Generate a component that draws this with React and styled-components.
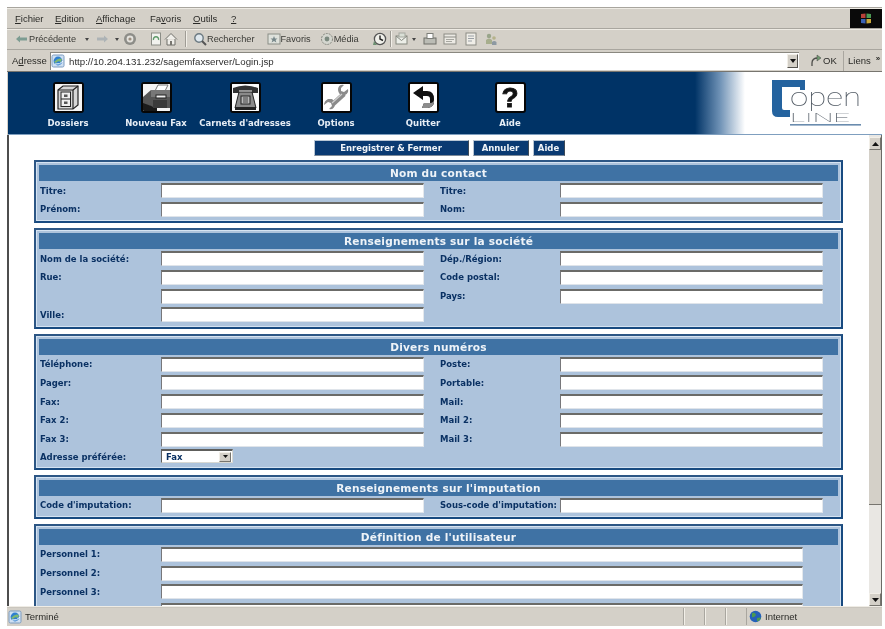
import React from "react";
import styled, { createGlobalStyle } from "styled-components";

const Global = createGlobalStyle`
  html, body { margin: 0; padding: 0; background: #fff; overflow: hidden; }
  * { box-sizing: border-box; }
`;

const Page = styled.div`
  width: 885px; height: 629px; padding: 7px 3px 3px 7px; background: #fff; overflow: hidden;
`;
const Win = styled.div`
  width: 875px; height: 619px; display: flex; flex-direction: column; background: #d4d0c8;
  border-top: 1px solid #a8a59e; filter: blur(0.4px);
  font-family: "Liberation Sans", Arial, sans-serif; font-size: 9.5px; color: #2a2a27;
`;
const MenuBar = styled.div`
  height: 21px; flex: none; display: flex; align-items: center; justify-content: space-between;
  border-bottom: 1px solid #a9a69f; box-shadow: inset 0 1px 0 #eeebe4;
`;
const MenuList = styled.div` display: flex; align-items: center; padding-left: 8px; `;
const MenuItem = styled.span` width: ${p => p.$w}px; white-space: nowrap; `;
const Flag = styled.div`
  width: 32px; height: 19px; background: #0a0a0a; display: flex; align-items: center; justify-content: center;
`;
const Toolbar = styled.div`
  height: 21px; flex: none; display: flex; align-items: center; padding-left: 8px; font-size: 9.2px;
  border-bottom: 1px solid #a9a69f; box-shadow: inset 0 1px 0 #eeebe4;
`;
const Tool = styled.span`
  display: inline-flex; align-items: center; margin-left: ${p => p.$ml || 0}px; white-space: nowrap; color: #3a3a36;
`;
const Caret = styled.span`
  display: inline-block; width: 0; height: 0; margin-left: ${p => p.$ml || 0}px;
  border-left: 2.5px solid transparent; border-right: 2.5px solid transparent; border-top: 3px solid #444;
`;
const ToolSep = styled.span`
  width: 2px; height: 16px; margin-left: ${p => p.$ml || 0}px;
  border-left: 1px solid #9f9c95; border-right: 1px solid #f2efe8;
`;
const AddressBar = styled.div`
  height: 22px; flex: none; display: flex; align-items: center; border-bottom: 1px solid #77756f;
`;
const AddressLabel = styled.span` width: 43px; flex: none; padding-left: 5px; `;
const AddressField = styled.div`
  width: 749px; flex: none; height: 18px; background: #fff; display: flex; align-items: center; gap: 4px; padding-right: 1px;
  border-top: 1px solid #8a8880; border-left: 1px solid #8a8880; color: #2f2f2f;
`;
const Url = styled.span` flex: 1; font-size: 9.7px; `;
const DropBtn = styled.span`
  width: 11px; height: 14px; background: #d4d0c8; display: flex; align-items: center; justify-content: center;
  border: 1px solid; border-color: #f2efe8 #55534f #55534f #f2efe8;
`;
const GoBtn = styled.span` display: inline-flex; flex: none; align-items: center; margin-left: 10px; gap: 0; width: 35px; height: 20px; border-right: 1px solid #a9a69f; `;
const Links = styled.span` margin-left: 4px; `;
const Chevron = styled.span` margin-left: 5px; font-size: 8px; font-weight: bold; position: relative; top: -2px; `;

const Banner = styled.div`
  height: 63px; flex: none; display: flex; align-items: stretch; justify-content: space-between;
  margin-left: 1px; padding-left: 16px;
  background: linear-gradient(90deg, #003366 0, #003366 687px, #6f92b6 712px, #fff 737px);
  border-bottom: 1px solid #7f9fbf;
`;
const Nav = styled.div` display: flex; `;
const NavItem = styled.div`
  width: ${p => p.$w}px; display: flex; flex-direction: column; align-items: center; padding-top: 10px; gap: 5px;
  font-family: "DejaVu Sans", sans-serif; font-size: 8.5px; font-weight: bold; color: #e6eef6; white-space: nowrap;
`;
const NavIcon = styled.div`
  width: 31px; height: 31px; background: #fff; border: 2px solid #060606; border-radius: 3px; overflow: hidden;
  display: flex; align-items: center; justify-content: center;
`;
const LogoSvg = styled.svg`
  flex: none; margin-top: 6px; display: block;
`;
const LogoWord = styled.text`
  font-family: Roboto, "Liberation Sans", sans-serif; font-weight: 100; fill: #4f5862;
`;

const Body = styled.div`
  flex: 1; min-height: 0; display: flex; border-left: 2px solid #4d4d4d; overflow: hidden;
`;
const Content = styled.div`
  width: 860px; background: #fff; overflow: hidden; padding-top: 5px;
`;
const ButtonRow = styled.div`
  display: flex; justify-content: center; gap: 4px; margin-bottom: 4px;
`;
const ActionButton = styled.div`
  width: ${p => p.$w}px; height: 16px; background: #0a3a72; color: #f0f4f8;
  display: flex; align-items: center; justify-content: center;
  border: 1px solid; border-color: #b9c6d4 #3d4a58 #7e8a98 #b9c6d4;
  font-family: "DejaVu Sans", sans-serif; font-size: 8.5px; font-weight: bold;
`;
const Section = styled.section`
  width: 809px; margin: 0 0 5px 25px; padding: 3px 3px 4.25px;
  background: #adc3dc; border: 2px solid #1f4b7c; border-color: #2c5685 #184a80 #184a80 #2c5685;
  box-shadow: inset 0 0 0 1px #d5e3f2;
`;
const SectionTitle = styled.h2`
  margin: 0 0 2px; height: 16px; background: #3f72a4; color: #eef3f8; text-align: center;
  font-family: "DejaVu Sans", sans-serif; font-size: 10.6px; font-weight: bold; line-height: 16px; letter-spacing: 0.2px;
`;
const Grid = styled.div`
  display: grid; grid-template-columns: 121px 263px 16px 120px 263px; grid-auto-rows: 15px;
  grid-template-rows: ${p => p.$rows || "none"}; row-gap: 3.75px; padding-left: 1px;
`;
const WideGrid = styled.div`
  display: grid; grid-template-columns: 121px 642px; grid-auto-rows: 15px; row-gap: 3.75px; padding-left: 1px;
`;
const Label = styled.label`
  align-self: center; font-family: "DejaVu Sans", sans-serif; font-size: 8.5px; font-weight: bold; color: #0a3163; white-space: nowrap;
  grid-column: ${p => p.$col || "auto"};
`;
const Field = styled.div`
  height: 15px; background: #fff; border: 1px solid; border-color: #6b6b68 #e4e8ec #dfe4ea #77777a; border-top-width: 2px;
  grid-column: ${p => p.$col || "auto"};
`;
const BlankRowField = styled(Field)` grid-column: 2; `;
const SelectBox = styled.div`
  width: 72px; height: 14px; margin-top: -1px; background: #fff; display: flex; align-items: center; justify-content: space-between; padding: 0 1px 0 4px;
  border: 1px solid; border-color: #5e5e5c #d8d8d2 #d8d8d2 #5e5e5c; border-top-width: 2px;
  font-family: "DejaVu Sans", sans-serif; font-size: 8.5px; font-weight: bold; color: #0a3163;
`;
const SelectBtn = styled.span`
  width: 12px; height: 10px; background: #d4d0c8; display: flex; align-items: center; justify-content: center;
  border: 1px solid; border-color: #f2efe8 #77756f #77756f #f2efe8;
`;
const Scrollbar = styled.div`
  width: 13px; flex: none; display: flex; flex-direction: column; background: #e9e7e3; border-right: 1px solid #6b6a66; padding-top: 2px;
`;
const ScrollBtn = styled.div`
  height: 13px; flex: none; background: #d4d0c8; display: flex; align-items: center; justify-content: center;
  border: 1px solid; border-color: #f2efe8 #77756f #77756f #f2efe8;
`;
const Thumb = styled.div`
  height: 355px; flex: none; background: #d4d0c8; border-bottom: 1px solid #77756f;
`;
const Track = styled.div` flex: 1; `;
const StatusBar = styled.div`
  height: 20px; flex: none; display: flex; align-items: center; border-top: 1px solid #efece5;
  box-shadow: inset 0 1px 0 #cac6be; padding-left: 1px;
`;
const StatusMain = styled.div` width: 675px; display: flex; align-items: center; gap: 3px; `;
const StatusCell = styled.div` width: 21px; height: 17px; border-left: 1px solid #a9a69f; box-shadow: inset 1px 0 0 #f2efe8; `;
const StatusZone = styled.div`
  display: flex; align-items: center; gap: 3px; padding-left: 2px; height: 17px; border-left: 1px solid #a9a69f;
`;

const Arrow = ({ up, w = 7, h = 4 }) => (
  <svg width={w} height={h} viewBox="0 0 7 5" preserveAspectRatio="none"><path d={up ? "M3.5 0 L7 5 H0 Z" : "M0 0 H7 L3.5 5 Z"} fill="#111" /></svg>
);
const IEIcon = ({ s = 13 }) => (
  <svg width={s} height={s} viewBox="0 0 14 14">
    <rect x="1" y="1" width="12" height="12" rx="1.5" fill="#cfe0f2" stroke="#7d9cc0" />
    <circle cx="7" cy="7" r="4.4" fill="#2f7fd0" />
    <path d="M3 8 Q7 3 11 5 L10 8 Q7 6 5 9 Z" fill="#7fb872" />
    <path d="M4 10 Q9 11 12 7" stroke="#fff" fill="none" />
  </svg>
);

const T = ({ children, w = 14 }) => <svg width={w} height="14" viewBox={`0 0 ${w} 14`}>{children}</svg>;
const Icons = {
  back: <T><path d="M1 7 L5 3.5 V5.5 H12 V8.5 H5 V10.5 Z" fill="#7d9c92" /></T>,
  fwd: <T><path d="M13 7 L9 3.5 V5.5 H2 V8.5 H9 V10.5 Z" fill="#adb3b6" /></T>,
  stop: <T><circle cx="7" cy="7" r="6" fill="#8d8d88" /><circle cx="7" cy="7" r="3.4" fill="#e4e2dd" /><circle cx="7" cy="7" r="1.6" fill="#9c8f80" /></T>,
  refresh: <T><rect x="2.5" y="1" width="9" height="12" fill="#f2f2ee" stroke="#8b8d86" /><path d="M4.5 8 A2.6 2.6 0 1 1 9.5 8" stroke="#5f9a6a" strokeWidth="1.4" fill="none" /></T>,
  home: <T><path d="M1 7.5 L7 1.5 L13 7.5 M3 7 V13 H11 V7" fill="#efeee9" stroke="#6e6e69" /><rect x="6" y="9" width="2" height="4" fill="#77756f" /></T>,
  search: <T><circle cx="6" cy="6" r="4.2" fill="#dfe8ee" stroke="#6c7a82" strokeWidth="1.4" /><path d="M9 9 L13 13" stroke="#555" strokeWidth="2" /></T>,
  fav: <T><rect x="1" y="2" width="12" height="10" fill="#dfe2dc" stroke="#8a8d86" /><path d="M7 4 L8 6.5 H10.5 L8.6 8 L9.4 10.4 L7 9 L4.6 10.4 L5.4 8 L3.5 6.5 H6 Z" fill="#77878a" /></T>,
  media: <T><circle cx="7" cy="7" r="5.5" fill="#d4d6cf" stroke="#85877f" strokeDasharray="2 1" /><circle cx="7" cy="7" r="2.4" fill="#7c8a80" /></T>,
  hist: <T w={16}><circle cx="8" cy="7" r="5.6" fill="#f0f0ea" stroke="#555" strokeWidth="1.3" /><path d="M8 3.5 V7 L11 8.5" stroke="#222" fill="none" strokeWidth="1.4" /><path d="M2 9 L5 13 L1 13 Z" fill="#6b8f70" /></T>,
  mail: <T w={16}><rect x="1" y="4" width="11" height="8" fill="#eceee8" stroke="#85887f" /><path d="M1 4 L6.5 8.5 L12 4" fill="none" stroke="#85887f" /><rect x="4" y="1" width="6" height="4" fill="#d9dfd6" stroke="#a5a89f" /></T>,
  print: <T><rect x="1" y="6" width="12" height="6" fill="#bbbcb5" stroke="#6e6f69" /><rect x="4" y="1.5" width="6" height="5" fill="#fff" stroke="#7b7c76" /></T>,
  edit: <T><rect x="1" y="2" width="12" height="10" fill="#eceae4" stroke="#8b8b84" /><path d="M1 5 H13" stroke="#8b8b84" /><path d="M3 7.5 H11 M3 9.5 H9" stroke="#a7a7a0" /></T>,
  discuss: <T><rect x="2" y="1" width="10" height="12" fill="#f0eee8" stroke="#8b8b84" /><path d="M4 4 H10 M4 6.5 H10 M4 9 H8" stroke="#9aa0a6" /></T>,
  msg: <T><circle cx="5" cy="4" r="2.2" fill="#99a58a" /><path d="M2 12 V8 Q5 5 8 8 V12 Z" fill="#a7ae8d" /><circle cx="10" cy="6" r="1.8" fill="#b5b28a" /><path d="M8 13 V10 Q10 8 12.5 10 V13 Z" fill="#8d99a2" /></T>,
  go: <T><path d="M3 12 V9 Q3 4 9 4" stroke="#4d4d4a" strokeWidth="1.3" fill="none" /><path d="M8 1 L12 4 L8 7 Z" fill="#6f9a70" stroke="#444" strokeWidth=".5" /></T>,
};

const B = ({ children }) => <svg width="27" height="27" viewBox="0 0 27 27">{children}</svg>;
const NavIcons = {
  folder: <B>
    <rect x="0" y="0" width="27" height="27" fill="#f4f4f4" />
    <path d="M3 6 L8 2 H23 V21 L18 25 H3 Z" fill="#d6d6d6" stroke="#222" strokeWidth="1.2" />
    <path d="M3 6 H18 V25" fill="none" stroke="#222" strokeWidth="1.2" />
    <path d="M18 6 L23 2" stroke="#222" strokeWidth="1.2" />
    <rect x="6" y="8" width="9.5" height="14.5" fill="#efefef" stroke="#222" />
    <path d="M6 15 H15.5" stroke="#222" strokeWidth="1.2" />
    <rect x="9" y="10.5" width="3.5" height="2.5" fill="#555" /><rect x="9" y="17.5" width="3.5" height="2.5" fill="#555" />
  </B>,
  fax: <B>
    <rect width="27" height="27" fill="#f4f4f4" />
    <path d="M11 9 L15 1 H25 L21 9 Z" fill="#fff" stroke="#777" />
    <path d="M0 13 L8 6 H27 V24 H14 L0 20 Z" fill="#555" />
    <path d="M8 6 H27 V13 H8 Z" fill="#777" />
    <rect x="13" y="11" width="10" height="3" fill="#eee" stroke="#222" />
    <path d="M0 19 L14 24 V27 H0 Z" fill="#1a1a1a" />
    <path d="M10 16 H24 V24 H10 Z" fill="#3a3a3a" />
  </B>,
  phone: <B>
    <rect width="27" height="27" fill="#fbfbfb" />
    <path d="M1 4 Q13 -1 26 4 V9 H20 V6.5 H7 V9 H1 Z" fill="#333" />
    <path d="M7 8 H20 L24 24 H3 Z" fill="#8a8a8a" stroke="#222" />
    <rect x="9" y="12" width="9" height="8" fill="#b8b8b8" stroke="#222" />
    <path d="M11 14 H16 M11 16 H16 M11 18 H16" stroke="#444" />
    <rect x="3" y="23" width="21" height="3" fill="#222" />
  </B>,
  wrench: <B>
    <rect width="27" height="27" fill="#fff" />
    <path d="M21 10 L10 20" stroke="#8b8b8b" strokeWidth="5" />
    <path d="M25 5 L21 8 L18 7 L18 4 L21 1 Q16 0 15 5 Q15 9 18 11 L22 11 Q26 9 25 5 Z" fill="#8b8b8b" />
    <path d="M1 21 L5 18 L8 19 L9 22 L6 25 Q11 26 12 21 Q12 17 9 15 L5 15 Q1 17 1 21 Z" fill="#8b8b8b" />
    <path d="M9 19 L19 10" stroke="#d0d0d0" strokeWidth="1.2" />
  </B>,
  quit: <B>
    <rect width="27" height="27" fill="#fff" />
    <path d="M13 2 L3 9 L13 16 V12 H17 Q20 12 20 15 V19 H14 L12 24 H18 Q25 23 24 15 Q24 7 17 7 H13 Z" fill="#111" />
    <path d="M14 19 H20 Q24 19 24 15 Q25 23 18 24 H12 Z" fill="#8d8d8d" />
  </B>,
};

const Help = styled.span`
  font-family: "Liberation Sans", sans-serif; font-size: 28px; font-weight: 900; color: #111; line-height: 1; -webkit-text-stroke: 0.8px #111;
`;

const navItems = [
  ["Dossiers", 88, NavIcons.folder],
  ["Nouveau Fax", 88, NavIcons.fax],
  ["Carnets d'adresses", 90, NavIcons.phone],
  ["Options", 92, NavIcons.wrench],
  ["Quitter", 82, NavIcons.quit],
  ["Aide", 92, <Help>?</Help>],
];

const Row2 = ({ a, b }) => (
  <>
    {a ? <Label $col="1">{a.l}</Label> : null}
    {a ? <Field $col="2" /> : null}
    {b ? <Label $col="4">{b.l}</Label> : null}
    {b ? <Field $col="5" /> : null}
  </>
);

const FormSection = ({ title, rows, extra, gridRows }) => (
  <Section>
    <SectionTitle>{title}</SectionTitle>
    <Grid $rows={gridRows}>
      {rows.map(([a, b], i) => (
        <Row2 key={i} a={a && { l: a }} b={b && { l: b }} />
      ))}
      {extra}
    </Grid>
  </Section>
);

export default function App() {
  return (
    <>
      <Global />
      <Page>
        <Win>
          <MenuBar>
            <MenuList>
              <MenuItem $w={40}><u>F</u>ichier</MenuItem>
              <MenuItem $w={41}><u>E</u>dition</MenuItem>
              <MenuItem $w={54}><u>A</u>ffichage</MenuItem>
              <MenuItem $w={43}>Fa<u>v</u>oris</MenuItem>
              <MenuItem $w={38}><u>O</u>utils</MenuItem>
              <MenuItem $w={10}><u>?</u></MenuItem>
            </MenuList>
            <Flag>
              <svg width="12" height="11" viewBox="0 0 12 11">
                <path d="M1 1 L5.5 .5 V5 H1 Z" fill="#b8413a" /><path d="M6.5 .5 L11 1 V5 H6.5 Z" fill="#4c9a55" />
                <path d="M1 6 H5.5 V10.5 L1 10 Z" fill="#3a62b5" /><path d="M6.5 6 H11 V10 L6.5 10.5 Z" fill="#c9a83a" />
              </svg>
            </Flag>
          </MenuBar>
          <Toolbar>
            <Tool>{Icons.back}Précédente</Tool>
            <Caret $ml={9} />
            <Tool $ml={6}>{Icons.fwd}</Tool>
            <Caret $ml={6} />
            <Tool $ml={4}>{Icons.stop}</Tool>
            <Tool $ml={12}>{Icons.refresh}</Tool>
            <Tool $ml={1}>{Icons.home}</Tool>
            <ToolSep $ml={7} />
            <Tool $ml={6}>{Icons.search}Rechercher</Tool>
            <Tool $ml={12}>{Icons.fav}Favoris</Tool>
            <Tool $ml={9}>{Icons.media}Média</Tool>
            <Tool $ml={13}>{Icons.hist}</Tool>
            <ToolSep $ml={2} />
            <Tool $ml={3}>{Icons.mail}</Tool>
            <Caret $ml={1} />
            <Tool $ml={7}>{Icons.print}</Tool>
            <Tool $ml={6}>{Icons.edit}</Tool>
            <Tool $ml={7}>{Icons.discuss}</Tool>
            <Tool $ml={6}>{Icons.msg}</Tool>
          </Toolbar>
          <AddressBar>
            <AddressLabel>A<u>d</u>resse</AddressLabel>
            <AddressField>
              <IEIcon s={14} />
              <Url>http://10.204.131.232/sagemfaxserver/Login.jsp</Url>
              <DropBtn><Arrow w={6} h={4} /></DropBtn>
            </AddressField>
            <GoBtn>{Icons.go}OK</GoBtn>
            <Links>Liens</Links>
            <Chevron>»</Chevron>
          </AddressBar>
          <Banner>
            <Nav>
              {navItems.map(([label, w, icon]) => (
                <NavItem key={label} $w={w}>
                  <NavIcon>{icon}</NavIcon>
                  {label}
                </NavItem>
              ))}
            </Nav>
            <LogoSvg width="112" height="52" viewBox="0 0 112 52">
              <path d="M2 2 H35 V12 H30 V9 H12 V30 Q12 32 14 32 H20 V39 H8 Q2 39 2 33 Z" fill="#24639f" />
              <LogoWord x="20" y="28" fontSize="25" textLength="71" lengthAdjust="spacingAndGlyphs">open</LogoWord>
              <LogoWord x="20" y="44" fontSize="13" textLength="60" lengthAdjust="spacingAndGlyphs">LINE</LogoWord>
              <rect x="20" y="46" width="71" height="1.6" fill="#6a8cae" />
            </LogoSvg>
          </Banner>
          <Body>
            <Content>
              <ButtonRow>
                <ActionButton $w={155}>Enregistrer &amp; Fermer</ActionButton>
                <ActionButton $w={56}>Annuler</ActionButton>
                <ActionButton $w={32}>Aide</ActionButton>
              </ButtonRow>
              <FormSection title="Nom du contact" rows={[["Titre:", "Titre:"], ["Prénom:", "Nom:"]]} />
              <Section>
                <SectionTitle>Renseignements sur la société</SectionTitle>
                <Grid>
                  <Row2 a={{ l: "Nom de la société:" }} b={{ l: "Dép./Région:" }} />
                  <Row2 a={{ l: "Rue:" }} b={{ l: "Code postal:" }} />
                  <BlankRowField />
                  <Row2 b={{ l: "Pays:" }} />
                  <Row2 a={{ l: "Ville:" }} />
                </Grid>
              </Section>
              <FormSection
                title="Divers numéros"
                gridRows="repeat(5, 15px) 13px"
                rows={[["Téléphone:", "Poste:"], ["Pager:", "Portable:"], ["Fax:", "Mail:"], ["Fax 2:", "Mail 2:"], ["Fax 3:", "Mail 3:"]]}
                extra={
                  <>
                    <Label $col="1">Adresse préférée:</Label>
                    <SelectBox>Fax<SelectBtn><Arrow w={5} h={3} /></SelectBtn></SelectBox>
                  </>
                }
              />
              <FormSection title="Renseignements sur l'imputation" rows={[["Code d'imputation:", "Sous-code d'imputation:"]]} />
              <Section>
                <SectionTitle>Définition de l'utilisateur</SectionTitle>
                <WideGrid>
                  {["Personnel 1:", "Personnel 2:", "Personnel 3:"].map(l => (
                    <React.Fragment key={l}>
                      <Label $col="1">{l}</Label>
                      <Field $col="2" />
                    </React.Fragment>
                  ))}
                  <Field $col="2" />
                </WideGrid>
              </Section>
            </Content>
            <Scrollbar>
              <ScrollBtn><Arrow up w={7} h={4} /></ScrollBtn>
              <Thumb />
              <Track />
              <ScrollBtn><Arrow w={7} h={4} /></ScrollBtn>
            </Scrollbar>
          </Body>
          <StatusBar>
            <StatusMain><IEIcon s={14} />Terminé</StatusMain>
            <StatusCell /><StatusCell /><StatusCell />
            <StatusZone>
              <svg width="13" height="13" viewBox="0 0 13 13">
                <circle cx="6.5" cy="6.5" r="5.8" fill="#2460b8" />
                <path d="M3 3 Q6 2 7 5 Q5 8 3 7 Z M8 8 Q11 7 12 8 Q10 12 8 11 Z" fill="#4a9a50" />
              </svg>
              Internet
            </StatusZone>
          </StatusBar>
        </Win>
      </Page>
    </>
  );
}
